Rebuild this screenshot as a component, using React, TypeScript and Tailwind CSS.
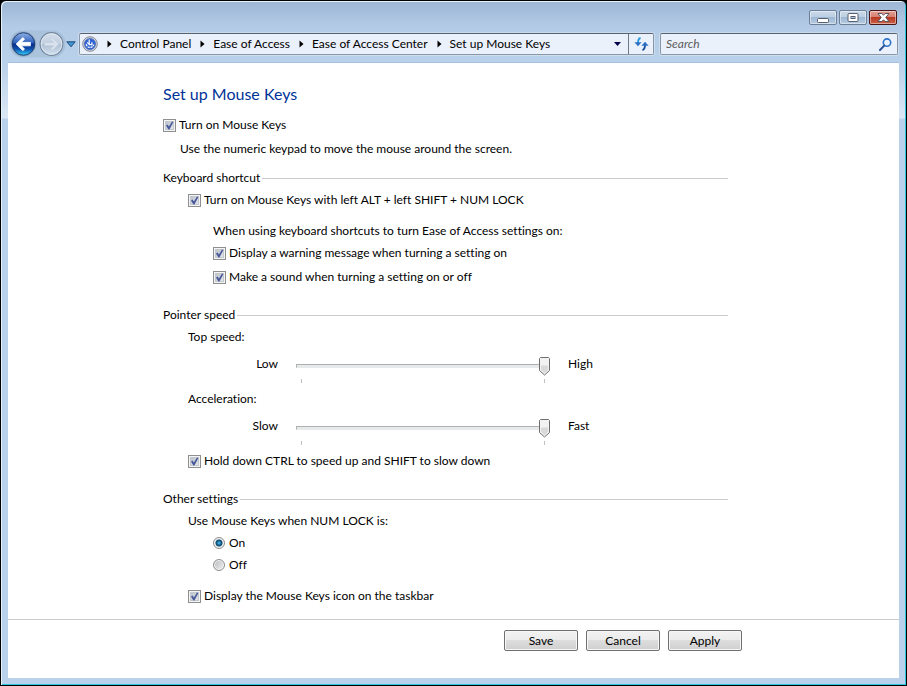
import { useState } from "react";
import type { ReactNode } from "react";

function WindowControls() {
  const base =
    "flex h-[15px] w-7 items-center justify-center rounded-xs border shadow-[inset_0_0_0_1px_rgba(255,255,255,0.45)]";
  const glass =
    "border-[#6c7f97] bg-[linear-gradient(#c9d9ea_0%,#bccee2_48%,#9fb8d3_50%,#b5cbe2_100%)]";
  return (
    <div className="flex justify-end gap-[2px] pt-[9px] pr-[9px]">
      <button type="button" aria-label="Minimize" className={`${base} ${glass}`}>
        <svg width="12" height="12" viewBox="0 0 12 12">
          <rect x="0.5" y="6.5" width="11" height="4" rx="1" fill="#fff" stroke="#555f6e" />
        </svg>
      </button>
      <button type="button" aria-label="Maximize" className={`${base} ${glass}`}>
        <svg width="12" height="11" viewBox="0 0 12 11">
          <rect x="1" y="1.5" width="10" height="8" rx="1" fill="#fff" stroke="#555f6e" />
          <rect x="4" y="4.5" width="4" height="2" fill="#a9bfd8" stroke="#555f6e" />
        </svg>
      </button>
      <button
        type="button"
        aria-label="Close"
        className={`${base} border-[#4b1418] bg-[linear-gradient(#e3a094_0%,#d4806f_46%,#b93a24_50%,#c9604a_100%)]`}
      >
        <svg width="13" height="11" viewBox="0 0 13 11">
          <path
            d="M1 1.5h3.8l1.7 1.7 1.7-1.7H12L8.8 5.5 12 9.5H8.2L6.5 7.8 4.8 9.5H1l3.2-4z"
            fill="#fff"
            stroke="#54565f"
            strokeLinejoin="round"
          />
        </svg>
      </button>
    </div>
  );
}

function TravelButtons() {
  return (
    <div className="flex h-[26px] shrink-0 items-center rounded-full bg-[#a3bad4]/60 shadow-[0_0_1px_#7d93ad]">
      <button type="button" aria-label="Back" className="block">
        <svg width="27" height="26" viewBox="0 0 27 27">
          <defs>
            <linearGradient id="back" x1="0" y1="0" x2="0" y2="1">
              <stop offset="0" stopColor="#8fb0e2" />
              <stop offset="0.45" stopColor="#2c5fbd" />
              <stop offset="0.5" stopColor="#0a2c86" />
              <stop offset="0.72" stopColor="#0d4fae" />
              <stop offset="1" stopColor="#35d3fa" />
            </linearGradient>
          </defs>
          <circle cx="13.5" cy="13.5" r="13" fill="#8ca5c2" />
          <circle cx="13.5" cy="13.5" r="11.7" fill="url(#back)" stroke="#1d3d74" />
          <path
            d="M12.8 6.8l1.8 1.6-3.2 3.4h9.3v3.6h-9.3l3.2 3.4-1.8 1.6-7-6.8z"
            fill="#fff"
            stroke="#fff"
            strokeWidth="0.8"
            strokeLinejoin="round"
          />
        </svg>
      </button>
      <button type="button" aria-label="Forward" className="block pl-px">
        <svg width="27" height="26" viewBox="0 0 27 27">
          <defs>
            <linearGradient id="forward" x1="0" y1="0" x2="0" y2="1">
              <stop offset="0" stopColor="#d3deea" />
              <stop offset="0.48" stopColor="#c3d0df" />
              <stop offset="0.52" stopColor="#aebfd2" />
              <stop offset="1" stopColor="#d5e3f2" />
            </linearGradient>
          </defs>
          <circle cx="13.5" cy="13.5" r="11.8" fill="url(#forward)" stroke="#74869c" strokeWidth="1.2" />
          <circle cx="13.5" cy="13.5" r="10.7" fill="none" stroke="#e4edf6" strokeWidth="0.8" />
          <path
            d="M14.2 6.8l-1.8 1.6 3.2 3.4H6.3v3.6h9.3l-3.2 3.4 1.8 1.6 7-6.8z"
            fill="#d9e3ee"
            stroke="#bccbdb"
            strokeWidth="0.8"
            strokeLinejoin="round"
          />
        </svg>
      </button>
    </div>
  );
}

function EaseIcon() {
  return (
    <svg width="16" height="16" viewBox="0 0 16 16" className="shrink-0">
      <circle cx="8" cy="8" r="7.3" fill="#d3d5de" stroke="#85889a" />
      <circle cx="8" cy="8" r="5.6" fill="#2f63d4" stroke="#4a5ea6" strokeWidth="0.6" />
      <path
        d="M4.2 8.2a3.9 3.9 0 0 0 7.6 0.4"
        fill="none"
        stroke="#fff"
        strokeWidth="1.3"
        strokeDasharray="2.2 0.7"
      />
      <path d="M7.2 3.4v4.8M5.2 6.4l2.2 2.2h3.2M9.9 6.2v2.6" fill="none" stroke="#fff" strokeWidth="1.2" />
    </svg>
  );
}

const crumbs = ["Control Panel", "Ease of Access", "Ease of Access Center", "Set up Mouse Keys"];

function AddressBar() {
  return (
    <div className="flex h-[22px] min-w-0 flex-1 rounded-xs border border-[#8996a8] border-t-[#58616f] bg-[#ebf1fa] shadow-[0_0_0_1px_rgba(255,255,255,0.3)]">
      <nav aria-label="Address" className="flex min-w-0 flex-1 items-center overflow-hidden pr-[7px] pl-[2px]">
        <EaseIcon />
        {crumbs.map((crumb) => (
          <span key={crumb} className="flex items-center">
            <svg width="5" height="8" viewBox="0 0 5 8" className="mr-2 ml-[9px]">
              <path d="M0.5 0.5v7l4-3.5z" fill="#000" />
            </svg>
            <a href="#" className="whitespace-nowrap">
              {crumb}
            </a>
          </span>
        ))}
        <button type="button" aria-label="Previous locations" className="ml-auto block">
          <svg width="7" height="4" viewBox="0 0 7 4">
            <path d="M0 0h7L3.5 4z" fill="#00004c" />
          </svg>
        </button>
      </nav>
      <button
        type="button"
        aria-label="Refresh"
        className="flex w-[25px] shrink-0 items-center justify-center border-l border-[#6d7887]"
      >
        <svg width="15" height="14" viewBox="0 0 15 14">
          <path d="M6.6 1C4.6 1.4 4 3 4 6" fill="none" stroke="#2f9be0" strokeWidth="1.9" />
          <path d="M0.4 5.2h7.2L4 9.2z" fill="#2b6fc6" />
          <path d="M8.4 13C10.4 12.6 11 11 11 8" fill="none" stroke="#1d4fa0" strokeWidth="1.9" />
          <path d="M7.4 8.8h7.2L11 4.8z" fill="#2b6fc6" />
        </svg>
      </button>
    </div>
  );
}

function SearchBox() {
  return (
    <div className="flex h-[22px] w-[238px] shrink-0 items-center rounded-xs border border-[#8996a8] border-t-[#58616f] bg-[#ebf1fa] pr-[5px] pl-[5px] shadow-[0_0_0_1px_rgba(255,255,255,0.3)]">
      <input
        type="search"
        aria-label="Search"
        placeholder="Search"
        className="min-w-0 flex-1 bg-transparent italic outline-none placeholder:text-[#5c5c5c]"
      />
      <svg width="13" height="13" viewBox="0 0 13 13">
        <circle cx="8" cy="4.6" r="3.7" fill="#e9f3fd" stroke="#2f74c8" strokeWidth="1.6" />
        <path d="M5.2 7.6L1 12" stroke="#2b5395" strokeWidth="2" strokeLinecap="round" />
      </svg>
    </div>
  );
}

function Checkbox({ children }: { children: ReactNode }) {
  return (
    <label className="flex w-fit items-center gap-[3px]">
      <span className="grid size-[13px] shrink-0">
        <input
          type="checkbox"
          defaultChecked
          className="peer col-start-1 row-start-1 size-[13px] appearance-none border border-[#8e8f8f] bg-[linear-gradient(135deg,#b4bac3,#eceef0)] shadow-[inset_0_0_0_1px_#f4f4f4,inset_0_0_0_2px_#c3c7ce]"
        />
        <svg
          viewBox="0 0 13 13"
          className="pointer-events-none invisible col-start-1 row-start-1 size-[13px] peer-checked:visible"
        >
          <path d="M3 6.4l1.6-.9 1.3 1.9L9 2.4l1.4.5-4 7.6h-1z" fill="#47599b" />
        </svg>
      </span>
      {children}
    </label>
  );
}

function Radio({ children, checked }: { children: ReactNode; checked?: boolean }) {
  return (
    <label className="flex w-fit items-center gap-1">
      <input
        type="radio"
        name="numlock"
        defaultChecked={checked}
        className="size-3 appearance-none rounded-full border border-[#8e8f8f] bg-[linear-gradient(135deg,#b9bcc0,#f0f0f0)] shadow-[inset_0_0_0_1px_#f4f4f4] checked:bg-[radial-gradient(circle_at_50%_50%,#7fd6f8_0px,#2590c6_1px,#0d4468_3px,#dfe3e7_4px)]"
      />
      {children}
    </label>
  );
}

function SpeedSlider({ label, low, high }: { label: string; low: string; high: string }) {
  const [value, setValue] = useState(100);
  return (
    <div className="flex h-7 items-start">
      <span className="w-[115px] text-right">{low}</span>
      <div className="relative mr-[18px] ml-[18px] w-[254px]">
        <input
          type="range"
          min={0}
          max={100}
          value={value}
          aria-label={label}
          onChange={(event) => setValue(Number(event.target.value))}
          className="block h-5 w-full appearance-none bg-transparent [&::-webkit-slider-runnable-track]:h-1 [&::-webkit-slider-runnable-track]:border [&::-webkit-slider-runnable-track]:border-[#e7eaea] [&::-webkit-slider-runnable-track]:border-t-[#b0b0b0] [&::-webkit-slider-runnable-track]:border-l-[#b0b0b0] [&::-webkit-slider-runnable-track]:bg-[#e7eaea] [&::-webkit-slider-thumb]:h-1 [&::-webkit-slider-thumb]:w-[11px] [&::-webkit-slider-thumb]:appearance-none"
        />
        <svg
          width="11"
          height="19"
          viewBox="0 0 11 19"
          className="pointer-events-none absolute top-px"
          style={{ left: `${(value / 100) * 243}px` }}
        >
          <path
            d="M1.5 0.5h8l1 1v12L5.5 18 0.5 13.5v-12z"
            fill="#f2f2f2"
            stroke="#6e6e6e"
            strokeLinejoin="round"
          />
          <path d="M2 8.5h7v4.3l-3.5 3.4L2 12.8z" fill="#d9d9d9" />
        </svg>
        <div className="mt-[3px] flex justify-between px-[5px]">
          <span className="h-1 w-px bg-[#c0c0c0]" />
          <span className="h-1 w-px bg-[#c0c0c0]" />
        </div>
      </div>
      <span>{high}</span>
    </div>
  );
}

function Section({ title, children }: { title: string; children: ReactNode }) {
  return (
    <section>
      <h2 className="flex items-center gap-[2px] after:h-px after:flex-1 after:bg-[#cccccc]">{title}</h2>
      <div className="pt-1.5 pl-[25px]">{children}</div>
    </section>
  );
}

function DialogButton({ children }: { children: ReactNode }) {
  return (
    <button
      type="button"
      className="h-[21px] w-[74px] rounded-xs border border-[#707070] bg-[linear-gradient(#f2f2f2_0%,#ebebeb_48%,#dddddd_50%,#cfcfcf_100%)] shadow-[inset_0_0_0_1px_#f6f6f6]"
    >
      {children}
    </button>
  );
}

export default function App() {
  return (
    <div className="min-h-screen bg-black font-[Lato,'Open_Sans',sans-serif] text-xs text-black [font-variant-ligatures:none]">
      <div className="flex min-h-screen flex-col rounded-t-md border border-black bg-[linear-gradient(#9cb6d4_0px,#b3cbe6_26px,#b9d1ea_62px,#dbe7f5_117px,#b9d1ea_118px)] shadow-[inset_1px_1px_0_#e6f3fb,inset_-1px_-1px_0_#2ec4dc]">
        <header>
          <WindowControls />
          <div className="mt-[6px] flex h-[26px] items-center pr-2 pl-[9px]">
            <TravelButtons />
            <button type="button" aria-label="Recent pages" className="mr-[3px] ml-[1px] block">
              <svg width="10" height="7" viewBox="0 0 10 7">
                <path d="M0.8 0.8h8.4L5 5.8z" fill="#3f97cf" stroke="#1f4a80" strokeLinejoin="round" />
              </svg>
            </button>
            <AddressBar />
            <div className="w-1.5 shrink-0" />
            <SearchBox />
          </div>
        </header>

        <main className="mx-[7px] mt-[5px] mb-[7px] flex-1 border-t border-[#a5bfdc] bg-white">
          <div className="pr-[171px] pl-[155px]">
            <h1 className="pt-[19px] text-base/6 text-[#003399]">Set up Mouse Keys</h1>
            <div className="pt-[11px]">
              <Checkbox>Turn on Mouse Keys</Checkbox>
            </div>
            <p className="pt-2 pb-[13px] pl-[17px]">Use the numeric keypad to move the mouse around the screen.</p>

            <Section title="Keyboard shortcut">
              <Checkbox>Turn on Mouse Keys with left ALT + left SHIFT + NUM LOCK</Checkbox>
              <div className="pt-[15px] pb-[22px] pl-[25px]">
                <p className="pb-1.5">When using keyboard shortcuts to turn Ease of Access settings on:</p>
                <div className="flex flex-col gap-2">
                  <Checkbox>Display a warning message when turning a setting on</Checkbox>
                  <Checkbox>Make a sound when turning a setting on or off</Checkbox>
                </div>
              </div>
            </Section>

            <Section title="Pointer speed">
              <p className="pb-[11px]">Top speed:</p>
              <div className="-ml-[25px]">
                <SpeedSlider label="Top speed" low="Low" high="High" />
              </div>
              <p className="pt-[7px] pb-[11px]">Acceleration:</p>
              <div className="-ml-[25px]">
                <SpeedSlider label="Acceleration" low="Slow" high="Fast" />
              </div>
              <div className="pt-[7px] pb-[22px]">
                <Checkbox>Hold down CTRL to speed up and SHIFT to slow down</Checkbox>
              </div>
            </Section>

            <Section title="Other settings">
              <fieldset>
                <legend>Use Mouse Keys when NUM LOCK is:</legend>
                <div className="flex flex-col gap-1.5 pt-1.5 pl-[25px]">
                  <Radio checked>On</Radio>
                  <Radio>Off</Radio>
                </div>
              </fieldset>
              <div className="py-[15px]">
                <Checkbox>Display the Mouse Keys icon on the taskbar</Checkbox>
              </div>
            </Section>
          </div>

          <footer className="flex justify-end gap-2 border-t border-[#cccccc] pt-[10px] pr-[157px]">
            <DialogButton>Save</DialogButton>
            <DialogButton>Cancel</DialogButton>
            <DialogButton>Apply</DialogButton>
          </footer>
        </main>
      </div>
    </div>
  );
}
